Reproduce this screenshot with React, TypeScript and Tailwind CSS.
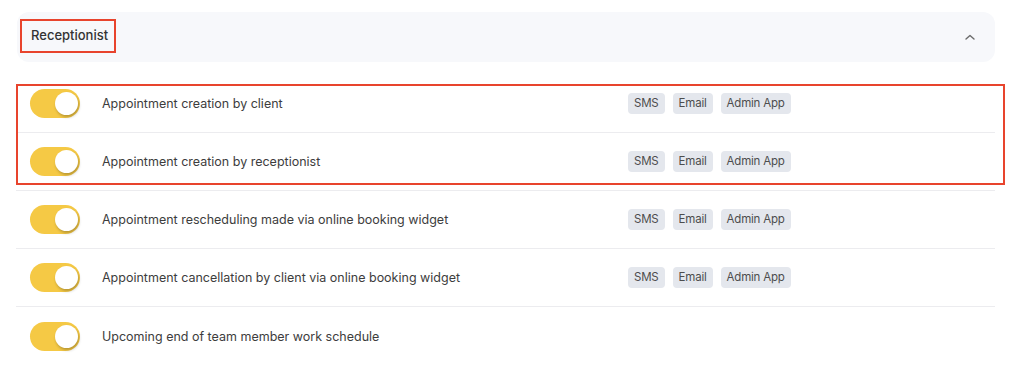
const rows = [
  { label: 'Appointment creation by client', channels: ['SMS', 'Email', 'Admin App'] },
  { label: 'Appointment creation by receptionist', channels: ['SMS', 'Email', 'Admin App'] },
  { label: 'Appointment rescheduling made via online booking widget', channels: ['SMS', 'Email', 'Admin App'] },
  { label: 'Appointment cancellation by client via online booking widget', channels: ['SMS', 'Email', 'Admin App'] },
  { label: 'Upcoming end of team member work schedule', channels: [] as string[] },
]

const Toggle = () => (
  <div className="relative w-[50px] h-[29px] rounded-full bg-[#f5c945] shrink-0">
    <span className="absolute right-[2px] top-[3px] w-[23px] h-[23px] rounded-full bg-white shadow-[1px_2px_3px_rgba(0,0,0,0.25)]" />
  </div>
)

export default function App() {
  return (
    <div className="relative w-[1024px] h-[373px] bg-white overflow-hidden font-['Inter',sans-serif]">
      {/* Section header */}
      <div className="mt-[12px] ml-[17px] w-[978px] h-[50px] rounded-xl bg-[#f7f8fb] flex items-center justify-between pl-[14px] pr-[20px]">
        <span className="text-[13px] font-medium text-[#333] pb-[3px]">Receptionist</span>
        <svg width="10" height="6" viewBox="0 0 10 6" fill="none">
          <path d="M1 5L5 1.5L9 5" stroke="#6b6b6b" strokeWidth="1.4" strokeLinecap="round" strokeLinejoin="round" />
        </svg>
      </div>

      {/* Notification rows */}
      <div className="mt-[13px] ml-[16px] w-[979px]">
        {rows.map((row, i) => (
          <div
            key={row.label}
            className={`flex items-center h-[58px] pl-[14px] ${i < rows.length - 1 ? 'border-b border-[#ececef]' : ''}`}
          >
            <Toggle />
            <span className="ml-[22px] w-[526px] pt-[2px] text-[12.5px] text-[#3d3d3d]">{row.label}</span>
            <div className="flex gap-[8px]">
              {row.channels.map((c) => (
                <span
                  key={c}
                  className="h-[21px] px-[6px] flex items-center rounded-[4px] bg-[#e4e7ed] text-[11.5px] tracking-[-0.2px] text-[#4d4d4d]"
                >
                  {c}
                </span>
              ))}
            </div>
          </div>
        ))}
      </div>

      {/* Annotation boxes */}
      <div className="absolute left-[20px] top-[19px] w-[96px] h-[34px] border-2 border-[#e8442d]" />
      <div className="absolute left-[16px] top-[84px] w-[989px] h-[101px] border-2 border-[#e8442d]" />
    </div>
  )
}
